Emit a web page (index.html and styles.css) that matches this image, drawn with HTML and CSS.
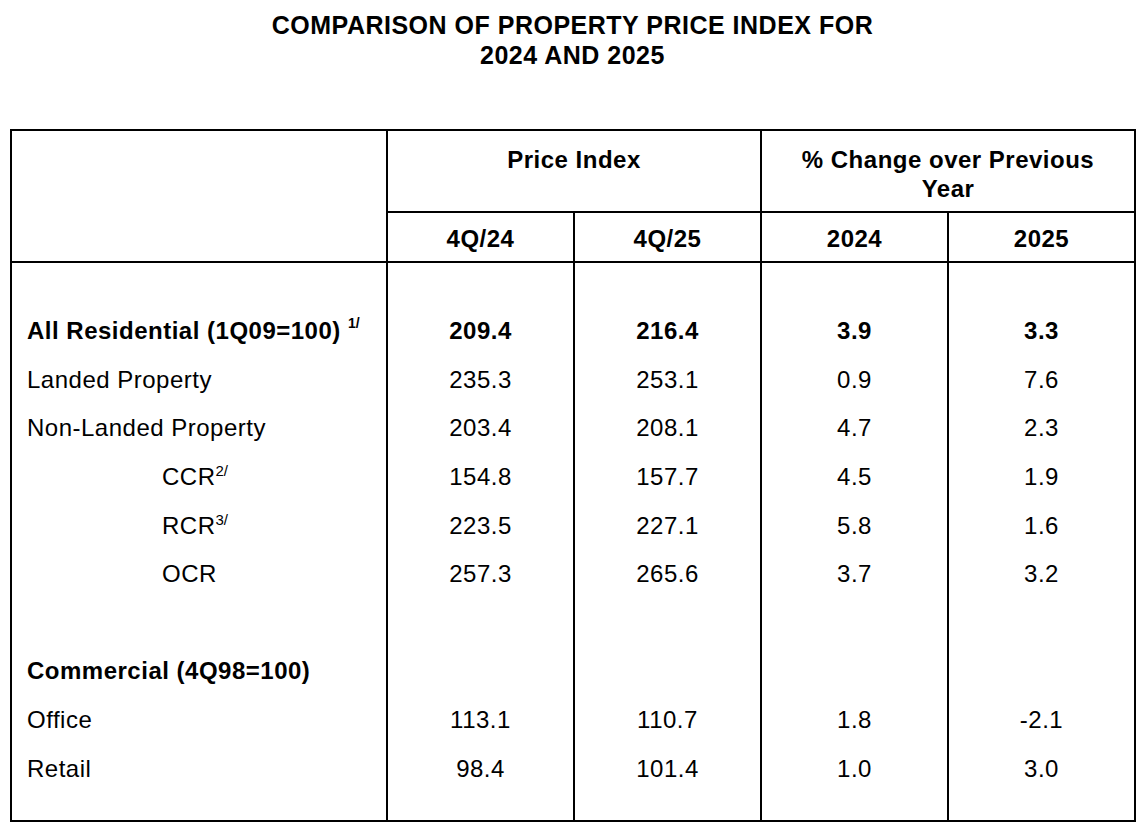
FILE: index.html
```html
<!DOCTYPE html>
<html lang="en">
<head>
<meta charset="utf-8">
<title>Comparison of Property Price Index for 2024 and 2025</title>
<link rel="stylesheet" href="styles.css">
</head>
<body>
<div class="page">
  <h1 class="title">COMPARISON OF PROPERTY PRICE INDEX FOR<br>2024 AND 2025</h1>
  <table class="ppi">
    <colgroup>
      <col class="c-label">
      <col class="c-num">
      <col class="c-num">
      <col class="c-num">
      <col class="c-num">
    </colgroup>
    <thead>
      <tr class="head-top">
        <th rowspan="2" class="blank"></th>
        <th colspan="2">Price Index</th>
        <th colspan="2">% Change over Previous<br>Year</th>
      </tr>
      <tr class="head-sub">
        <th>4Q/24</th>
        <th>4Q/25</th>
        <th>2024</th>
        <th>2025</th>
      </tr>
    </thead>
    <tbody>
      <tr class="gap-top"><td></td><td></td><td></td><td></td><td></td></tr>
      <tr class="row bold">
        <td class="label">All Residential (1Q09=100) <sup class="note-b">1/</sup></td>
        <td>209.4</td><td>216.4</td><td>3.9</td><td>3.3</td>
      </tr>
      <tr class="row">
        <td class="label">Landed Property</td>
        <td>235.3</td><td>253.1</td><td>0.9</td><td>7.6</td>
      </tr>
      <tr class="row">
        <td class="label">Non-Landed Property</td>
        <td>203.4</td><td>208.1</td><td>4.7</td><td>2.3</td>
      </tr>
      <tr class="row">
        <td class="label sub">CCR<sup class="note">2/</sup></td>
        <td>154.8</td><td>157.7</td><td>4.5</td><td>1.9</td>
      </tr>
      <tr class="row">
        <td class="label sub">RCR<sup class="note">3/</sup></td>
        <td>223.5</td><td>227.1</td><td>5.8</td><td>1.6</td>
      </tr>
      <tr class="row">
        <td class="label sub">OCR</td>
        <td>257.3</td><td>265.6</td><td>3.7</td><td>3.2</td>
      </tr>
      <tr class="row"><td></td><td></td><td></td><td></td><td></td></tr>
      <tr class="row">
        <td class="label strong">Commercial (4Q98=100)</td>
        <td></td><td></td><td></td><td></td>
      </tr>
      <tr class="row">
        <td class="label">Office</td>
        <td>113.1</td><td>110.7</td><td>1.8</td><td>-2.1</td>
      </tr>
      <tr class="row">
        <td class="label">Retail</td>
        <td>98.4</td><td>101.4</td><td>1.0</td><td>3.0</td>
      </tr>
      <tr class="gap-bottom"><td></td><td></td><td></td><td></td><td></td></tr>
    </tbody>
  </table>
</div>
</body>
</html>
```
FILE: styles.css
```css
html, body {
  margin: 0;
  padding: 0;
  background: #ffffff;
}

body {
  font-family: "Liberation Sans", Arial, sans-serif;
  color: #000000;
}

.page {
  padding: 10px 10px 0 10px;
}

.title {
  margin: 0;
  font-size: 25px;
  line-height: 30px;
  font-weight: 700;
  letter-spacing: 0.5px;
  text-align: center;
  height: 119px;
}

.ppi {
  width: 1125px;
  border-collapse: collapse;
  table-layout: fixed;
  border: 2px solid #000;
  font-size: 24px;
  letter-spacing: 0.5px;
}

.c-label { width: 376px; }
.c-num { width: 187px; }

.ppi th {
  font-weight: 700;
  border: 2px solid #000;
  padding: 0;
}

.head-top th {
  height: 66px;
  vertical-align: top;
  padding-top: 14px;
  line-height: 29px;
}

.head-sub th {
  height: 45px;
  padding-top: 3px;
  vertical-align: middle;
  line-height: 28px;
}

.ppi td {
  border-left: 2px solid #000;
  border-right: 2px solid #000;
  padding: 0;
  text-align: center;
  vertical-align: middle;
}

.gap-top td { height: 44px; }
.gap-bottom td { height: 27px; }

.row td {
  height: 48.6px;
  line-height: 28px;
}

.row.bold td { font-weight: 700; }

.ppi td.label {
  text-align: left;
  padding-left: 15px;
}

.ppi td.label.sub { padding-left: 150px; }

.ppi td.strong { font-weight: 700; }

.note,
.note-b {
  font-size: 15px;
  line-height: 0;
  letter-spacing: 0;
  vertical-align: 9px;
}

.note-b {
  font-weight: 700;
  font-size: 14px;
  vertical-align: 11px;
}
```
